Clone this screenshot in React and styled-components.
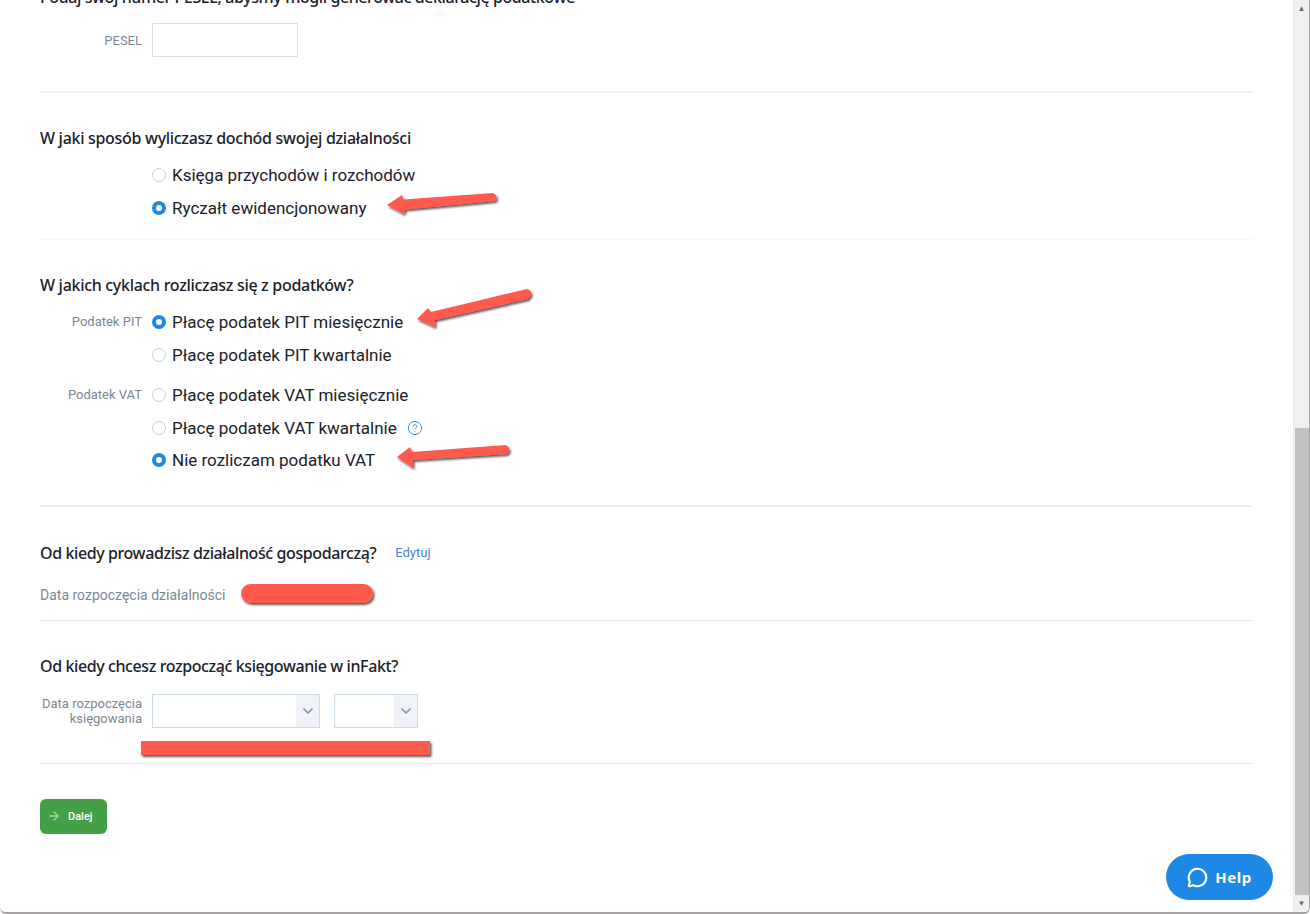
import React from 'react';
import styled, { createGlobalStyle } from 'styled-components';
import { ArrowRight, ChevronDown, CircleHelp, MessageCircle } from 'lucide-react';

const GlobalStyle = createGlobalStyle`
  html, body {
    margin: 0;
    padding: 0;
    background: #fff;
    overflow: hidden;
  }
`;

const App = () => {
  return (
    <Window>
      <GlobalStyle />
      <Content>
        <Section $pb={34} $line="2px solid #edf0f4">
          <CutTitle $tight>Podaj swój numer PESEL, abyśmy mogli generować deklarację podatkowe</CutTitle>
          <FieldRow>
            <FieldLabel>PESEL</FieldLabel>
            <TextInput />
          </FieldRow>
        </Section>

        <Section $pt={33} $pb={15.25} $line="1px solid #f5f6f8">
          <Title>W jaki sposób wyliczasz dochód swojej działalności</Title>
          <Group $mt={8.75}>
            <GroupLabel />
            <Options>
              <Option label="Księga przychodów i rozchodów" />
              <Option label="Ryczałt ewidencjonowany" checked />
            </Options>
          </Group>
        </Section>

        <Section $pt={33} $pb={28.25} $line="2px solid #edf0f4">
          <Title>W jakich cyklach rozliczasz się z podatków?</Title>
          <Group $mt={8.75}>
            <GroupLabel>Podatek PIT</GroupLabel>
            <Options>
              <Option label="Płacę podatek PIT miesięcznie" checked />
              <Option label="Płacę podatek PIT kwartalnie" />
            </Options>
          </Group>
          <Group $mt={8}>
            <GroupLabel>Podatek VAT</GroupLabel>
            <Options>
              <Option label="Płacę podatek VAT miesięcznie" />
              <Option label="Płacę podatek VAT kwartalnie" hint />
              <Option label="Nie rozliczam podatku VAT" checked />
            </Options>
          </Group>
        </Section>

        <Section $pt={34} $pb={15} $line="1px solid #e9edf3">
          <TitleRow>
            <Title $tight>Od kiedy prowadzisz działalność gospodarczą?</Title>
            <EditLink>Edytuj</EditLink>
          </TitleRow>
          <StartDate>Data rozpoczęcia działalności</StartDate>
        </Section>

        <Section $pt={33} $pb={35} $line="1px solid #e9edf3">
          <Title $tight>Od kiedy chcesz rozpocząć księgowanie w inFakt?</Title>
          <FieldRow $mt={16}>
            <FieldLabel>Data rozpoczęcia<br />księgowania</FieldLabel>
            <SelectBox $width={168}>
              <SelectArrow><ChevronDown size={16} strokeWidth={2.6} /></SelectArrow>
            </SelectBox>
            <SelectBox $width={84} $ml={14}>
              <SelectArrow><ChevronDown size={16} strokeWidth={2.6} /></SelectArrow>
            </SelectBox>
          </FieldRow>
        </Section>

        <NextButton>
          <ArrowRight size={14} color="#a5d6a7" strokeWidth={2.5} />
          Dalej
        </NextButton>
      </Content>

      <Scrollbar>
        <ScrollArrow>▲</ScrollArrow>
        <ScrollThumb />
        <ScrollArrow>▼</ScrollArrow>
      </Scrollbar>

      <Marks viewBox="0 0 1310 914">
        <g fill="#ff5a4d" filter="url(#markShadow)">
          <path d="M387 205 L402 195 L403 199.5 L493 193 Q499 196 495 201 L405 209.5 L404 214 Z" />
          <path d="M417 319 L428 308 L431 312 L527 289 Q535 292 528 299 L435 320 L435 327 Z" />
          <path d="M397 457 L410 447 L412 452 L506 445 Q512 449 507 454 L413 460 L413 468 Z" />
          <rect x="241" y="584" width="132" height="19" rx="9.5" />
          <rect x="141" y="741" width="289" height="14" />
        </g>
        <defs>
          <filter id="markShadow" x="-10%" y="-30%" width="120%" height="170%">
            <feDropShadow dx="1.5" dy="2" stdDeviation="0.9" floodColor="#000" floodOpacity="0.65" />
          </filter>
        </defs>
      </Marks>

      <HelpButton>
        <MessageCircle size={21} strokeWidth={2.4} />
        Help
      </HelpButton>
    </Window>
  );
};

const Option = ({ label, checked, hint }) => (
  <OptionRow>
    <Radio $checked={checked} />
    <OptionText>{label}</OptionText>
    {hint && <HintIcon><CircleHelp size={16} strokeWidth={1.5} /></HintIcon>}
  </OptionRow>
);

export default App;

const Window = styled.div`
  position: relative;
  display: flex;
  width: 1310px;
  height: 914px;
  overflow: hidden;
  box-sizing: border-box;
  border-right: 1px solid #a8a4a4;
  border-bottom: 2px solid #a8a4a4;
  border-bottom-left-radius: 6px;
  border-bottom-right-radius: 6px;
  background: #fff;
  font-family: Roboto, Arial, sans-serif;
  color: #1a2129;
`;

const Content = styled.main`
  flex: 1;
  min-width: 0;
  padding: 0 40px;
`;

const Section = styled.section`
  padding: ${(p) => p.$pt || 0}px 0 ${(p) => p.$pb || 0}px;
  border-bottom: ${(p) => p.$line};
`;

const Title = styled.h2`
  margin: 0;
  font-family: 'Noto Sans', sans-serif;
  font-size: 16px;
  font-weight: 500;
  line-height: 24px;
  letter-spacing: ${(p) => (p.$tight ? '-0.4px' : '-0.3px')};
  color: #1a2129;
`;

const CutTitle = styled(Title)`
  margin-top: -15px;
  margin-bottom: 14px;
`;

const TitleRow = styled.div`
  display: flex;
  align-items: center;
  gap: 19px;
`;

const EditLink = styled.a`
  font-size: 13px;
  color: #4a7fd4;
  cursor: pointer;
`;

const FieldRow = styled.div`
  display: flex;
  align-items: center;
  margin-top: ${(p) => p.$mt || 0}px;
`;

const FieldLabel = styled.label`
  width: 102px;
  margin-right: 10px;
  font-size: 13px;
  line-height: 15px;
  text-align: right;
  color: #7b8794;
`;

const TextInput = styled.input`
  box-sizing: border-box;
  width: 146px;
  height: 34px;
  padding: 0 8px;
  border: 1px solid #d3e0ea;
  border-radius: 1px;
  background: #fff;
  outline: none;
`;

const SelectBox = styled.div`
  box-sizing: border-box;
  display: flex;
  justify-content: flex-end;
  width: ${(p) => p.$width}px;
  height: 34px;
  margin-left: ${(p) => p.$ml || 0}px;
  border: 1px solid #c9dbe8;
  background: #fff;
`;

const SelectArrow = styled.span`
  display: flex;
  align-items: center;
  justify-content: center;
  width: 23px;
  background: #eff2f6;
  color: #8496a8;
`;

const Group = styled.div`
  display: flex;
  margin-top: ${(p) => p.$mt || 0}px;
`;

const GroupLabel = styled.div`
  width: 102px;
  margin-right: 10px;
  font-size: 13px;
  line-height: 32.5px;
  text-align: right;
  color: #7b8794;
`;

const Options = styled.div`
  display: flex;
  flex-direction: column;
`;

const OptionRow = styled.label`
  display: flex;
  align-items: center;
  height: 32.5px;
`;

const Radio = styled.span`
  box-sizing: border-box;
  flex: none;
  width: 14px;
  height: 14px;
  margin-right: 6px;
  border-radius: 50%;
  background: #fff;
  border: ${(p) => (p.$checked ? '4px solid #1e88e5' : '1px solid #c4d0da')};
`;

const OptionText = styled.span`
  font-size: 17px;
  color: #1a2129;
`;

const HintIcon = styled.span`
  display: flex;
  margin-left: 10px;
  color: #2f8fdc;
`;

const StartDate = styled.div`
  margin-top: 20px;
  font-size: 14px;
  line-height: 20px;
  color: #7b8794;
`;

const NextButton = styled.button`
  display: flex;
  align-items: center;
  gap: 7px;
  width: 67px;
  height: 35px;
  margin-top: 35px;
  padding: 0 0 0 7px;
  border: none;
  border-radius: 6px;
  background: #43a047;
  font-family: Roboto, Arial, sans-serif;
  font-size: 11px;
  font-weight: 500;
  color: #fff;
`;

const Scrollbar = styled.aside`
  flex: none;
  box-sizing: border-box;
  display: flex;
  flex-direction: column;
  width: 16px;
  background: #f0f0f0;
  border-left: 1px solid #e8e8e8;
`;

const ScrollArrow = styled.span`
  height: 17px;
  font-size: 8px;
  line-height: 17px;
  text-align: center;
  color: #6f6f6f;
`;

const ScrollThumb = styled.div`
  flex: 1;
  margin: 411px 0 0 1px;
  background: #c1c1c1;
`;

const Marks = styled.svg`
  position: absolute;
  top: 0;
  left: 0;
  width: 1310px;
  height: 914px;
  pointer-events: none;
`;

const HelpButton = styled.button`
  position: absolute;
  top: 854px;
  left: 1166px;
  display: flex;
  align-items: center;
  justify-content: center;
  gap: 7px;
  width: 107px;
  height: 46px;
  padding: 0;
  border: none;
  border-radius: 23px;
  background: #1e88e5;
  font-family: 'Noto Sans', sans-serif;
  font-size: 15px;
  font-weight: 700;
  letter-spacing: 0.5px;
  color: #fff;
`;
